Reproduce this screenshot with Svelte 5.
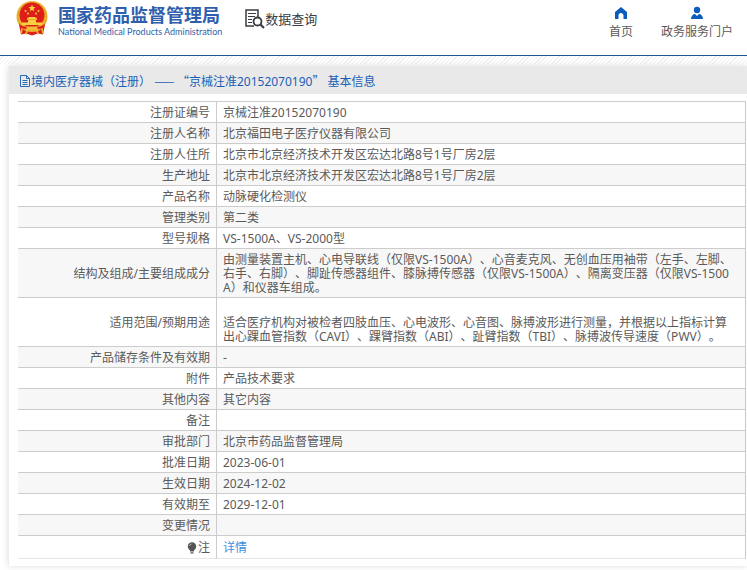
<script lang="ts">
	type Row = {
		label: string;
		value: string;
	};

	const certificate = '京械注准20152070190';

	const rows: Row[] = [
		{ label: '注册证编号', value: certificate },
		{ label: '注册人名称', value: '北京福田电子医疗仪器有限公司' },
		{ label: '注册人住所', value: '北京市北京经济技术开发区宏达北路8号1号厂房2层' },
		{ label: '生产地址', value: '北京市北京经济技术开发区宏达北路8号1号厂房2层' },
		{ label: '产品名称', value: '动脉硬化检测仪' },
		{ label: '管理类别', value: '第二类' },
		{ label: '型号规格', value: 'VS-1500A、VS-2000型' },
		{
			label: '结构及组成/主要组成成分',
			value:
				'由测量装置主机、心电导联线（仅限VS-1500A）、心音麦克风、无创血压用袖带（左手、左脚、右手、右脚）、脚趾传感器组件、膝脉搏传感器（仅限VS-1500A）、隔离变压器（仅限VS-1500A）和仪器车组成。'
		},
		{
			label: '适用范围/预期用途',
			value:
				'\n适合医疗机构对被检者四肢血压、心电波形、心音图、脉搏波形进行测量，并根据以上指标计算出心踝血管指数（CAVI）、踝臂指数（ABI）、趾臂指数（TBI）、脉搏波传导速度（PWV）。'
		},
		{ label: '产品储存条件及有效期', value: '-' },
		{ label: '附件', value: '产品技术要求' },
		{ label: '其他内容', value: '其它内容' },
		{ label: '备注', value: '' },
		{ label: '审批部门', value: '北京市药品监督管理局' },
		{ label: '批准日期', value: '2023-06-01' },
		{ label: '生效日期', value: '2024-12-02' },
		{ label: '有效期至', value: '2029-12-01' },
		{ label: '变更情况', value: '' }
	];
</script>

<header class="site-header">
	<a class="brand" href="#home">
		<svg class="emblem" viewBox="0 0 32 35" aria-hidden="true">
			<path d="M3 24h26l-2 10-5-1-6 2-6-2-5 1z" fill="#d9241c" />
			<circle cx="16" cy="16" r="15.5" fill="#eeb12f" />
			<circle cx="16" cy="16" r="14" fill="none" stroke="#e09a26" stroke-dasharray="2 2" />
			<circle cx="16" cy="14.5" r="12.5" fill="#dc1f18" />
			<path
				d="M16 4l1 2.500 2.600.1-2 1.700.7 2.500-2.300-1.400-2.300 1.400.7-2.500-2-1.700 2.600-.1z"
				fill="#f8cf3c"
			/>
			<g fill="#f8cf3c">
				<circle cx="9.500" cy="10.500" r="1" />
				<circle cx="12" cy="13" r="1" />
				<circle cx="20" cy="13" r="1" />
				<circle cx="22.500" cy="10.500" r="1" />
				<path d="M11 18l2-1.500h6l2 1.500v1.200H11zM12 19.500h8V22h-8zM6 22h20v2.500H6z" />
			</g>
			<path d="M3 23c4 4 9 4 13 2 4 2 9 2 13-2l-1 4c-4 2-8 2-12 0-4 2-8 2-12 0z" fill="#e3261c" />
			<path d="M11 26h10l1 4H10z" fill="#f1bd36" />
			<path d="M6 28l-1 5M26 28l1 5M11 30l-1 4M21 30l1 4" stroke="#f1bd36" stroke-width="1.500" />
		</svg>
		<span class="brand-text">
			<strong>国家药品监督管理局</strong>
			<span lang="en">National Medical Products Administration</span>
		</span>
	</a>
	<a class="query" href="#query">
		<svg viewBox="0 0 20 20" fill="none" stroke="#393c43" aria-hidden="true">
			<path d="M9 17H1V1h12v7" stroke-width="1.500" />
			<path d="M3 4.500h8M3 7.500h7M3 10.500h4M3 13.500h4" stroke-width="1.200" />
			<circle cx="12.500" cy="12.500" r="4" stroke-width="1.800" />
			<path d="M15.500 15.500l3.500 3.500" stroke-width="2.200" />
		</svg>
		数据查询
	</a>
	<nav>
		<a href="#home">
			<svg viewBox="0 0 14 14" aria-hidden="true">
				<path d="M7 1l6 5v7H9.500V9.500a2.500 2.500 0 0 0-5 0V13H1V6z" fill="#0b5dbb" />
			</svg>
			首页
		</a>
		<a href="#portal">
			<svg viewBox="0 0 14 14" aria-hidden="true">
				<circle cx="7" cy="4" r="3.200" fill="#0b5dbb" />
				<path d="M1 13c0-3 2-5 4-5l2 2 2-2c2 0 4 2 4 5z" fill="#0b5dbb" />
			</svg>
			政务服务门户
		</a>
	</nav>
</header>

<main>
	<section class="panel">
		<h1>
			<svg viewBox="0 0 12 12" fill="none" stroke="#2a68b8" aria-hidden="true">
				<path d="M1.500.5h6l3 3v8h-9zM7.500.5v3h3M3.500 5.500h5M3.500 7.500h5M3.500 9.500h5" />
			</svg>
			<span>
				境内医疗器械（注册） <span class="wide">—— “</span>{certificate}<span class="wide">”</span>
				基本信息
			</span>
		</h1>
		<table>
			<tbody>
				{#each rows as row (row.label)}
					<tr>
						<th scope="row">{row.label}</th>
						<td>{row.value}</td>
					</tr>
				{/each}
				<tr class="note">
					<th scope="row">
						<svg viewBox="0 0 9 12" aria-hidden="true">
							<circle cx="4.500" cy="4.500" r="4.200" fill="#555" />
							<path d="M2.500 8h4v1.500h-4zM3 10.300h3v1.200H3z" fill="#555" />
							<path d="M2 4a2.500 2.500 0 0 1 2-2" fill="none" stroke="#ddd" stroke-width=".7" />
						</svg>注
					</th>
					<td><a href="#detail">详情</a></td>
				</tr>
			</tbody>
		</table>
	</section>
</main>

<style>
	:global(body) {
		margin: 0;
		background: #fff;
		color: #5a5a5a;
		font-family: 'Noto Sans', 'Noto Sans CJK SC', sans-serif;
		font-size: 12px;
		line-height: 14px;
		text-spacing-trim: space-all;
	}
	a {
		color: inherit;
		text-decoration: none;
	}
	svg {
		flex: none;
	}
	.site-header {
		display: flex;
		align-items: flex-start;
		height: 55px;
		padding: 0 14px 0 16px;
		border-bottom: 1px solid #1c5790;
	}
	.brand {
		display: flex;
		gap: 10px;
		color: #2f5fac;
	}
	.emblem {
		width: 32px;
		height: 36px;
	}
	.brand-text {
		display: flex;
		flex-direction: column;
		padding-top: 3px;
		font-family: Lato, 'Liberation Sans', sans-serif;
		font-size: 9px;
		white-space: nowrap;
	}
	.brand-text strong {
		font-family: 'Noto Sans CJK SC', sans-serif;
		font-size: 18px;
		line-height: 22px;
	}
	.query {
		display: flex;
		align-items: center;
		margin: 8px 0 0 23px;
		color: #393c43;
		font-size: 13px;
		line-height: 20px;
	}
	.query svg {
		width: 20px;
		height: 22px;
	}
	nav {
		display: flex;
		gap: 28px;
		margin-left: auto;
		padding-top: 6px;
	}
	nav a {
		display: flex;
		flex-direction: column;
		align-items: center;
		gap: 5px;
	}
	nav svg {
		width: 14px;
		height: 14px;
	}
	main {
		padding: 10px 0 4px 8px;
		overflow: hidden;
		background: repeating-linear-gradient(135deg, #fff 0 2px, #f0f0f0 2px 3px) 0 0 / 100% 8px
			no-repeat;
	}
	.panel {
		padding-bottom: 7px;
		border-left: 1px solid #eee;
		background: #fff;
		box-shadow: 0 0 6px #ddd;
	}
	h1 {
		display: flex;
		align-items: center;
		box-sizing: border-box;
		height: 28px;
		margin: 0 0 7px;
		padding: 2px 0 0 10px;
		background: #e9e9e9;
		color: #1b5fb5;
		font-size: 12px;
		font-weight: normal;
	}
	h1 svg {
		width: 12px;
		height: 12px;
	}
	.wide {
		font-family: 'Noto Sans CJK SC', sans-serif;
	}
	table {
		width: calc(100% - 10px);
		margin-left: 9px;
		border-top: 1px solid #ccc;
		border-right: 1px solid #c8c8cc;
		border-spacing: 0;
		table-layout: fixed;
	}
	th,
	td {
		padding: 4px 6px 2px;
		border-bottom: 1px solid #ccc;
		height: 14px;
		vertical-align: middle;
	}
	th {
		width: 186px;
		border-right: 1px solid #ccc;
		font-weight: normal;
		text-align: right;
	}
	td {
		padding-right: 10px;
		word-break: break-all;
		white-space: pre-line;
	}
	tr:nth-child(even) {
		background: #f7f7f7;
	}
	.note th,
	.note td {
		height: 16px;
		border-bottom-color: #e6e6e6;
	}
	.note svg {
		width: 10px;
		height: 12px;
		margin-right: 1px;
		vertical-align: -2px;
	}
	.note a {
		color: #3e8ede;
	}
</style>
